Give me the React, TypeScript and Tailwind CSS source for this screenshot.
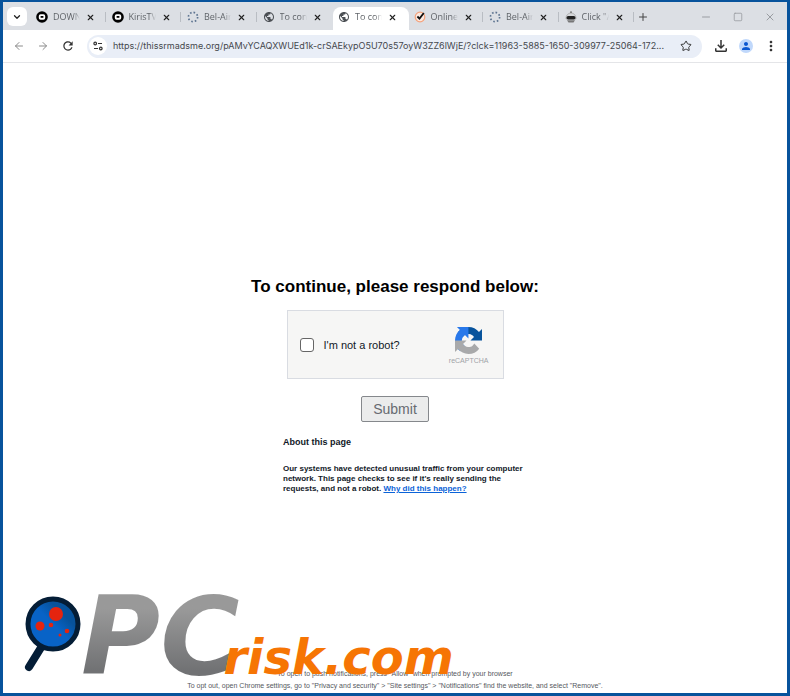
import React, { useState } from "react";
import { ArrowLeft, ArrowRight, ChevronDown, Minus, Plus, Square, Star, X } from "lucide-react";
import { MdMoreVert, MdOutlineFileDownload, MdPerson, MdPublic, MdRefresh } from "react-icons/md";

type IconKind = "video" | "spinner" | "globe" | "check" | "robot";

const tabs: { title: string; icon: IconKind; active?: boolean }[] = [
  { title: "DOWNLOAD", icon: "video" },
  { title: "KirisTV", icon: "video" },
  { title: "Bel-Air", icon: "spinner" },
  { title: "To continue", icon: "globe" },
  { title: "To continue", icon: "globe", active: true },
  { title: "Online", icon: "check" },
  { title: "Bel-Air", icon: "spinner" },
  { title: 'Click "Allow"', icon: "robot" },
];

function Favicon({ kind }: { kind: IconKind }) {
  if (kind === "globe") return <MdPublic className="size-3 shrink-0 text-[#4b4f54]" />;
  if (kind === "video")
    return (
      <svg viewBox="0 0 12 12" className="size-3 shrink-0">
        <circle cx="6" cy="6" r="5.8" fill="#000" />
        <rect x="2.8" y="3.2" width="6.4" height="5.6" rx="1.8" fill="#fff" />
        <rect x="4.6" y="5" width="2.8" height="1.8" fill="#000" />
      </svg>
    );
  if (kind === "spinner")
    return (
      <svg viewBox="0 0 12 12" className="size-3 shrink-0">
        <circle cx="6" cy="6" r="4.6" fill="none" stroke="#5d7390" strokeWidth="1.7" strokeDasharray="1.6 2.01" />
      </svg>
    );
  if (kind === "check")
    return (
      <svg viewBox="0 0 12 12" className="size-3 shrink-0">
        <circle cx="6" cy="6" r="4.8" fill="#fbe9e0" stroke="#f5a27c" strokeWidth="1.2" />
        <path d="M3.4 5.500 5.500 7.600 9.800 2" fill="none" stroke="#111" strokeWidth="1.8" />
      </svg>
    );
  return (
    <svg viewBox="0 0 12 12" className="size-3 shrink-0">
      <circle cx="6" cy="1.2" r="1" fill="#777" />
      <path d="M1 7a5 5 0 0 1 10 0v1H1z" fill="#d5d7da" stroke="#999" strokeWidth=".6" />
      <rect x="1.5" y="5" width="9" height="3.4" rx="1.7" fill="#222" />
      <path d="M2 9.200h8L8.500 11.600h-5z" fill="#777" />
    </svg>
  );
}

function TabStrip() {
  return (
    <div className="flex h-7 items-start bg-[#dcdfe4] pt-[5px] pl-1">
      <button aria-label="Search tabs" className="mr-1 flex h-[19px] w-5 shrink-0 items-center justify-center rounded-md bg-white">
        <ChevronDown className="size-[10px] text-[#222]" strokeWidth={3} />
      </button>
      <div role="tablist" className="flex h-full max-w-[604px] flex-1">
        {tabs.map((tab, i) => (
          <div
            key={i}
            className={
              tab.active
                ? "flex min-w-0 flex-1 items-center rounded-t-lg bg-white pb-[3px] pl-[5px]"
                : "flex min-w-0 flex-1 items-center pb-[3px] pl-[5px]"
            }
          >
            <Favicon kind={tab.icon} />
            <button
              role="tab"
              aria-selected={!!tab.active}
              className="ml-[5px] w-[27px] overflow-hidden bg-linear-to-r from-[#5a5e63] from-75% to-transparent bg-clip-text text-left text-[9px] leading-3 whitespace-nowrap text-transparent"
            >
              {tab.title}
            </button>
            <button aria-label="Close tab" className="ml-[6px]">
              <X className="size-[9px] text-[#222]" strokeWidth={3} />
            </button>
            {!tab.active && i !== 3 && <span className="mr-px ml-auto h-[10px] w-px bg-[#b9bdc3]" />}
          </div>
        ))}
      </div>
      <button aria-label="New tab" className="mt-1 ml-[2px]">
        <Plus className="size-3 text-[#444]" strokeWidth={2} />
      </button>
      <div className="mt-1 mr-[11px] ml-auto flex gap-5 text-[#9a9da2]">
        <button aria-label="Minimize"><Minus className="size-3" strokeWidth={2} /></button>
        <button aria-label="Maximize"><Square className="size-3 p-px" strokeWidth={2} /></button>
        <button aria-label="Close"><X className="size-3" strokeWidth={2} /></button>
      </div>
    </div>
  );
}

function Toolbar() {
  return (
    <div className="flex h-[33px] items-center border-b border-[#e4e5e8] bg-white pr-2 pl-[10px]">
      <button aria-label="Back"><ArrowLeft className="size-3 text-[#8b8b8b]" strokeWidth={2} /></button>
      <button aria-label="Forward" className="ml-3"><ArrowRight className="size-3 text-[#8b8b8b]" strokeWidth={2} /></button>
      <button aria-label="Reload" className="ml-3"><MdRefresh className="size-[14px] text-[#333]" /></button>
      <div className="ml-3 flex h-[23px] min-w-0 flex-1 items-center rounded-full bg-[#e9eef7] pr-[10px] pl-[2px]">
        <button aria-label="Site information" className="flex size-[18px] shrink-0 items-center justify-center rounded-full bg-white">
          <svg viewBox="0 0 10 10" className="size-[10px]" fill="none" stroke="#333" strokeWidth="1.2">
            <circle cx="2.2" cy="2.5" r="1.3" />
            <path d="M5 2.500h4M1 7.500h4" />
            <circle cx="7.8" cy="7.5" r="1.3" />
          </svg>
        </button>
        <input
          aria-label="Address"
          readOnly
          value="https://thissrmadsme.org/pAMvYCAQXWUEd1k-crSAEkypO5U70s57oyW3ZZ6lWjE/?clck=11963-5885-1650-309977-25064-172..."
          className="ml-[6px] min-w-0 flex-1 bg-transparent font-['Inter',sans-serif] text-[9px] text-[#45484d] outline-none"
        />
        <button aria-label="Bookmark" className="ml-2"><Star className="size-3 text-[#333]" strokeWidth={2} /></button>
      </div>
      <button aria-label="Downloads" className="ml-[10px]"><MdOutlineFileDownload className="size-[18px] text-[#333]" /></button>
      <button aria-label="Profile" className="ml-[9px] flex size-[14px] items-center justify-center rounded-full bg-[#c0d8fb]">
        <MdPerson className="size-3 text-[#0b57d0]" />
      </button>
      <button aria-label="Menu" className="ml-[10px]"><MdMoreVert className="size-4 text-[#333]" /></button>
    </div>
  );
}

function RecaptchaMark() {
  return (
    <svg viewBox="0 0 64 64" className="size-[27px]">
      <path
        d="M64 31.955l-.033-1.370V4.687l-7.160 7.160C50.948 4.674 42.033.093 32.050.093c-10.400 0-19.622 4.960-25.458 12.640l11.736 11.860a15.550 15.550 0 0 1 4.754-5.334c2.050-1.600 4.952-2.906 8.968-2.906.485 0 .860.057 1.135.163 4.976.393 9.288 3.140 11.828 7.124l-8.307 8.307L64 31.953"
        fill="#07539c"
      />
      <path
        d="M31.862.094l-1.370.033H4.594l7.160 7.160C4.580 13.147 0 22.060 0 32.046c0 10.400 4.960 19.622 12.640 25.458L24.500 45.768a15.550 15.550 0 0 1-5.334-4.754c-1.600-2.050-2.906-4.952-2.906-8.968 0-.485.057-.860.163-1.135.393-4.976 3.140-9.288 7.124-11.828l8.307 8.307L31.860.095"
        fill="#2878ea"
      />
      <path
        d="M.001 32.045l.033 1.370v25.898l7.160-7.160c5.860 7.173 14.774 11.754 24.760 11.754 10.400 0 19.622-4.960 25.458-12.640l-11.736-11.860a15.550 15.550 0 0 1-4.754 5.334c-2.050 1.600-4.952 2.906-8.968 2.906-.485 0-.860-.057-1.135-.163-4.976-.393-9.288-3.140-11.828-7.124l8.307-8.307c-10.522.040-22.400.066-27.295-.005"
        fill="#a8a9aa"
      />
    </svg>
  );
}

function MagnifierLogo() {
  return (
    <svg viewBox="0 0 60 78" className="h-[78px] w-[60px]">
      <defs>
        <linearGradient id="lens" x1="0" y1="1" x2="1" y2="0">
          <stop offset="0.5" stopColor="#0863c7" />
          <stop offset="0.7" stopColor="#07529b" />
        </linearGradient>
      </defs>
      <path d="M21 50 8 71" stroke="#041d36" strokeWidth="8" strokeLinecap="round" />
      <circle cx="32" cy="28" r="25" fill="url(#lens)" stroke="#041d36" strokeWidth="5" />
      <g fill="#e5240f">
        <circle cx="35" cy="18" r="7" />
        <circle cx="19" cy="30" r="4.500" />
        <circle cx="30" cy="29" r="2.300" />
        <circle cx="46" cy="35" r="2.300" />
        <circle cx="39" cy="39" r="1.500" />
      </g>
    </svg>
  );
}

function Watermark() {
  return (
    <div className="pointer-events-none absolute bottom-0 left-[18px] flex items-end">
      <div className="pb-[19px]">
        <MagnifierLogo />
      </div>
      <div className="flex items-baseline font-['DejaVu_Sans',sans-serif] font-bold whitespace-nowrap italic">
        <span className="bg-linear-to-b from-[#999] from-25% to-[#717274] to-80% bg-clip-text pr-4 text-[108px] leading-[112px] text-transparent">PC</span>
        <span className="-ml-8 text-[48px] leading-[48px] text-[#f67504]">risk.com</span>
      </div>
    </div>
  );
}

export default function App() {
  const [checked, setChecked] = useState(false);
  return (
    <div className="flex min-h-screen flex-col border-x-[3px] border-t-2 border-b-[3px] border-[#07539c] bg-white font-['Open_Sans','Noto_Sans',sans-serif]">
      <TabStrip />
      <Toolbar />
      <main className="relative flex flex-1 flex-col items-center font-['Liberation_Sans',Arial,sans-serif] text-[#111827]">
        <h1 className="mt-[212px] text-[17px] leading-6 font-bold text-black">To continue, please respond below:</h1>
        <div className="mt-[11px] flex h-[69px] w-[217px] items-center border border-[#d9dce2] bg-[#f6f6f5] pr-[14px] pl-3">
          <input
            id="robot"
            type="checkbox"
            checked={checked}
            onChange={(e) => setChecked(e.target.checked)}
            className="size-[14px] appearance-none rounded-[3px] border border-[#666] bg-white checked:bg-[#2878ea]"
          />
          <label htmlFor="robot" className="ml-[10px] text-[11px] leading-4">I'm not a robot?</label>
          <div className="mt-1 ml-auto flex flex-col items-center gap-px">
            <RecaptchaMark />
            <span className="text-[7px] leading-3 text-[#a0a3a7]">reCAPTCHA</span>
          </div>
        </div>
        <button className="mt-[17px] h-[26px] w-[68px] rounded-[2px] border border-[#85888c] bg-[#ebecec] text-[14px] leading-5 text-[#666a70]">Submit</button>
        <section className="ml-7 w-[252px] text-left font-bold">
          <h2 className="mt-[14px] text-[9px] leading-3">About this page</h2>
          <p className="mt-4 text-[8px] leading-[10px]">
            Our systems have detected unusual traffic from your computer network. This page checks to see if it's really sending the requests, and not a robot.{" "}
            <a href="#why" className="text-[#0b63d8] underline">Why did this happen?</a>
          </p>
        </section>
        <footer className="mt-auto pb-px text-center text-[7px] leading-3 text-[#55585e]">
          <p>To open to push notifications, press "Allow" when prompted by your browser</p>
          <p>To opt out, open Chrome settings, go to "Privacy and security" &gt; "Site settings" &gt; "Notifications" find the website, and select "Remove".</p>
        </footer>
        <Watermark />
      </main>
    </div>
  );
}
